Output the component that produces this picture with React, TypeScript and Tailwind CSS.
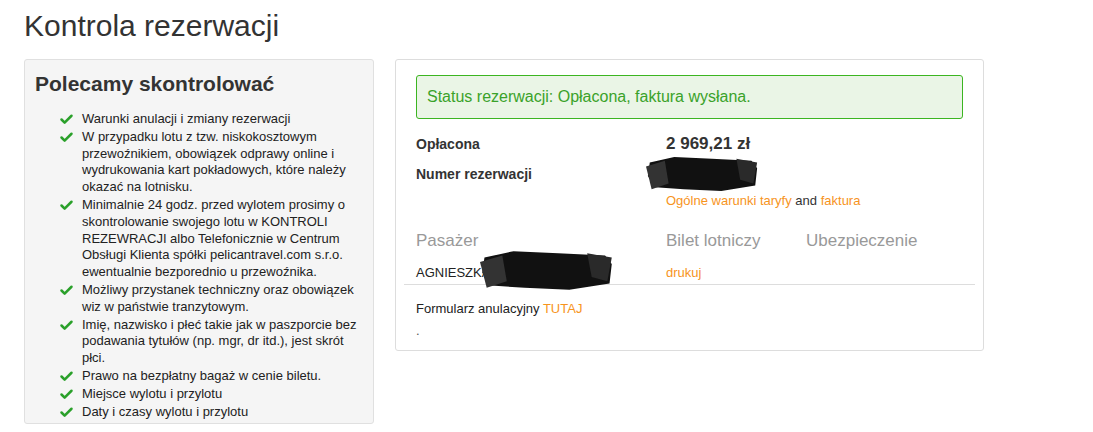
import { Check } from 'lucide-react'

const checks: string[] = [
  'Warunki anulacji i zmiany rezerwacji',
  'W przypadku lotu z tzw. niskokosztowym przewoźnikiem, obowiązek odprawy online i wydrukowania kart pokładowych, które należy okazać na lotnisku.',
  'Minimalnie 24 godz. przed wylotem prosimy o skontrolowanie swojego lotu w KONTROLI REZEWRACJI albo Telefonicznie w Centrum Obsługi Klienta spółki pelicantravel.com s.r.o. ewentualnie bezporednio u przewoźnika.',
  'Możliwy przystanek techniczny oraz obowiązek wiz w państwie tranzytowym.',
  'Imię, nazwisko i płeć takie jak w paszporcie bez podawania tytułów (np. mgr, dr itd.), jest skrót płci.',
  'Prawo na bezpłatny bagaż w cenie biletu.',
  'Miejsce wylotu i przylotu',
  'Daty i czasy wylotu i przylotu',
]

function Scribble({ className }: { className: string }) {
  return (
    <svg className={className} viewBox="0 0 120 40" preserveAspectRatio="none">
      <polygon points="4,8 30,2 70,4 112,6 118,14 116,32 80,38 40,36 10,34 2,22" fill="#111" />
      <polygon points="0,12 20,6 24,30 6,36" fill="#333" />
      <polygon points="96,4 118,8 114,30 100,26" fill="#2a2a2a" />
    </svg>
  )
}

export default function App() {
  return (
    <div className="min-h-screen w-full bg-white px-6 pt-2 text-[#333] [font-family:'Liberation_Sans',Arial,sans-serif]">
      <h1 className="text-[30px] leading-[36px] font-normal text-[#333]">Kontrola rezerwacji</h1>

      <div className="mt-[15px] flex items-start gap-[21px]">
        <aside className="w-[350px] rounded-[3px] border border-[#e0e0e0] bg-[#f5f5f5] pb-[3px] pl-[10px] pr-[8px] pt-[10px]">
          <h2 className="text-[21px] leading-[28px] font-bold text-[#333]">Polecamy skontrolować</h2>
          <ul className="mt-[13px] flex flex-col gap-[1px] pl-[24px]">
            {checks.map((item) => (
              <li key={item} className="flex items-start gap-[8px] text-[13px] leading-[16.8px] text-[#222]">
                <Check className="mt-[1px] h-[15px] w-[15px] shrink-0 text-[#2aa02a]" strokeWidth={4} />
                <span>{item}</span>
              </li>
            ))}
          </ul>
        </aside>

        <section className="relative w-[589px] rounded-[3px] border border-[#ddd] bg-white pb-[11px] pt-[15px]">
          <div className="mx-[20px] rounded-[3px] border border-[#3cb521] bg-[#eaf5e6] px-[10px] py-[11px] text-[16px] leading-[20px] text-[#3aa22a]">
            Status rezerwacji: Opłacona, faktura wysłana.
          </div>

          <div className="mt-[14px] px-[20px]">
            <div className="grid grid-cols-[250px_1fr] items-end">
              <span className="text-[14px] leading-[22px] font-bold text-[#333]">Opłacona</span>
              <span className="text-[17px] leading-[22px] font-bold text-[#333]">2 969,21 zł</span>
            </div>
            <div className="mt-[9px] grid grid-cols-[250px_1fr]">
              <span className="text-[14px] leading-[20px] font-bold text-[#333]">Numer rezerwacji</span>
              <span />
            </div>
            <div className="mt-[8px] grid grid-cols-[250px_1fr] text-[13px] leading-[18px]">
              <span />
              <span>
                <a className="text-[#f7941d]">Ogólne warunki taryfy</a> and{' '}
                <a className="text-[#f7941d]">faktura</a>
              </span>
            </div>

            <div className="mt-[20px] grid grid-cols-[250px_140px_1fr] text-[17px] leading-[22px] text-[#999]">
              <span>Pasażer</span>
              <span>Bilet lotniczy</span>
              <span>Ubezpieczenie</span>
            </div>
            <div className="mt-[11px] grid grid-cols-[250px_140px_1fr] text-[13px] leading-[20px]">
              <span className="text-[#222]">AGNIESZKA</span>
              <a className="text-[#f7941d]">drukuj</a>
              <span />
            </div>
          </div>

          <div className="mx-[8px] mt-[1px] h-px bg-[#ddd]" />

          <div className="mt-[14px] px-[20px] text-[13px] leading-[20px] text-[#222]">
            Formularz anulacyjny <a className="text-[#f7941d]">TUTAJ</a>
          </div>
          <div className="mt-[4px] px-[20px] text-[13px] leading-[16px] text-[#555]">.</div>

          <Scribble className="absolute left-[250px] top-[95px] h-[38px] w-[113px]" />
          <Scribble className="absolute left-[84px] top-[189px] h-[43px] w-[134px]" />
        </section>
      </div>
    </div>
  )
}
